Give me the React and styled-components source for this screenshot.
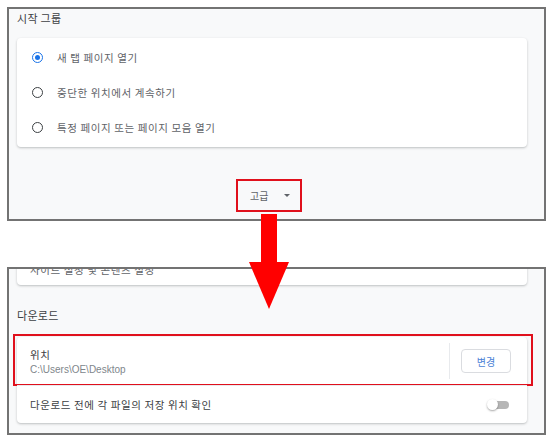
import React from "react"
import styled, { createGlobalStyle } from "styled-components"

const GlobalStyle = createGlobalStyle`
  html, body {
    margin: 0;
    padding: 0;
    background: #ffffff;
    font-family: "Noto Sans CJK KR", "Noto Sans", sans-serif;
  }
`;

const Page = styled.div`
  position: relative;
  width: 552px;
  height: 442px;
  padding: 7px 6px 0 7px;
  box-sizing: border-box;
  display: flex;
  flex-direction: column;
  gap: 46px;
`;

const Panel = styled.div`
  position: relative;
  height: ${(p) => p.height}px;
  box-sizing: border-box;
  border: 2px solid #737373;
  background: #f8f9fa;
  overflow: hidden;
  padding: 0 17px 0 8px;
  display: flex;
  flex-direction: column;
`;

const SectionTitle = styled.div`
  font-size: 11px;
  color: #3c4043;
  height: 16px;
  line-height: 16px;
  margin: ${(p) => p.margin};
  letter-spacing: 0.3px;
`;

const Card = styled.div`
  background: #ffffff;
  border-radius: 4px;
  box-shadow: 0 1px 2px rgba(60, 64, 67, 0.22), 0 1px 3px rgba(60, 64, 67, 0.1);
  display: flex;
  flex-direction: column;
  padding: ${(p) => p.pad || "0"};
  margin: ${(p) => p.margin || "0"};
`;

const RadioRow = styled.div`
  height: 35px;
  display: flex;
  align-items: center;
  padding-left: 15px;
  gap: 14px;
  font-size: 10.5px;
  color: #5f6368;
  letter-spacing: 0.6px;
`;

const Radio = styled.span`
  width: 11px;
  height: 11px;
  border-radius: 50%;
  box-sizing: border-box;
  border: 1.6px solid ${(p) => (p.checked ? "#1a73e8" : "#3c4043")};
  display: flex;
  align-items: center;
  justify-content: center;
  &::after {
    content: "";
    width: 5px;
    height: 5px;
    border-radius: 50%;
    background: ${(p) => (p.checked ? "#1a73e8" : "transparent")};
  }
`;

const Footer = styled.div`
  flex: 1;
  display: flex;
  align-items: center;
  justify-content: center;
  padding-top: 24px;
  padding-right: 6px;
`;

const AdvancedBox = styled.div`
  width: 66px;
  height: 33px;
  box-sizing: border-box;
  border: 2px solid #e0101c;
  display: flex;
  align-items: center;
  justify-content: space-between;
  padding: 0 10px 0 12px;
  font-size: 10px;
  color: #5f6368;
`;

const Caret = styled.span`
  width: 0;
  height: 0;
  border-left: 3px solid transparent;
  border-right: 3px solid transparent;
  border-top: 3px solid #5f6368;
  margin-top: 1px;
`;

const CutRow = styled.div`
  height: 30px;
  display: flex;
  align-items: flex-end;
  justify-content: space-between;
  padding: 0 18px 0 13px;
  font-size: 10.5px;
  color: #5f6368;
  letter-spacing: 0.6px;
  line-height: 14px;
  padding-bottom: 16px;
  box-sizing: border-box;
`;

const CutText = styled.span`
  margin-bottom: -8px;
`;

const Row = styled.div`
  position: relative;
  display: flex;
  align-items: center;
  height: ${(p) => p.height}px;
  padding: 0 16px 0 13px;
  border-top: ${(p) => (p.divided ? "1px solid #e8eaed" : "none")};
  ${(p) =>
    p.highlight &&
    `
    &::after {
      content: "";
      position: absolute;
      top: -3px;
      bottom: -1px;
      left: -4px;
      right: -6px;
      border: 2px solid #e0101c;
      pointer-events: none;
    }
  `}
`;

const RowText = styled.div`
  flex: 1;
  display: flex;
  flex-direction: column;
  gap: 2px;
`;

const Label = styled.div`
  font-size: 10.5px;
  color: #3c4043;
  letter-spacing: 0.6px;
`;

const SubLabel = styled.div`
  font-family: "Liberation Sans", Arial, sans-serif;
  font-size: 10px;
  color: #80868b;
`;

const Separator = styled.div`
  width: 1px;
  height: 36px;
  background: #e8eaed;
  margin-right: 11px;
`;

const OutlineButton = styled.div`
  width: 50px;
  height: 24px;
  box-sizing: border-box;
  border: 1px solid #dadce0;
  border-radius: 4px;
  display: flex;
  align-items: center;
  justify-content: center;
  font-size: 10px;
  color: #4a7fd6;
`;

const Toggle = styled.div`
  position: relative;
  width: 22px;
  height: 12px;
  display: flex;
  align-items: center;
  margin-right: 2px;
  &::before {
    content: "";
    position: absolute;
    left: 3px;
    right: 0;
    height: 8px;
    border-radius: 4px;
    background: #b6b6b6;
  }
  &::after {
    content: "";
    position: absolute;
    left: 0;
    width: 11px;
    height: 11px;
    border-radius: 50%;
    background: #ffffff;
    box-shadow: 0 1px 2px rgba(0, 0, 0, 0.35);
  }
`;

const Chevron = styled.span`
  font-size: 12px;
  color: #5f6368;
  line-height: 6px;
  height: 6px;
  overflow: hidden;
`;

const BigArrow = styled.svg`
  position: absolute;
  left: 247px;
  top: 214px;
`;

const options = [
  { label: "새 탭 페이지 열기", checked: true },
  { label: "중단한 위치에서 계속하기", checked: false },
  { label: "특정 페이지 또는 페이지 모음 열기", checked: false },
];

const App = () => {
  return (
    <>
      <GlobalStyle />
      <Page>
        <Panel height={214}>
          <SectionTitle margin="1px 0 12px 0">시작 그룹</SectionTitle>
          <Card pad="2px 0">
            {options.map((o, i) => (
              <RadioRow key={i}>
                <Radio checked={o.checked} />
                {o.label}
              </RadioRow>
            ))}
          </Card>
          <Footer>
            <AdvancedBox>
              고급
              <Caret />
            </AdvancedBox>
          </Footer>
        </Panel>

        <Panel height={168}>
          <Card margin="-14px 0 0 0">
            <CutRow>
              <CutText>사이트 설정 및 콘텐츠 설정</CutText>
              <Chevron>›</Chevron>
            </CutRow>
          </Card>
          <SectionTitle margin="22px 0 14px 0">다운로드</SectionTitle>
          <Card>
            <Row height={48} highlight>
              <RowText>
                <Label>위치</Label>
                <SubLabel>C:\Users\OE\Desktop</SubLabel>
              </RowText>
              <Separator />
              <OutlineButton>변경</OutlineButton>
            </Row>
            <Row height={37} divided>
              <RowText>
                <Label>다운로드 전에 각 파일의 저장 위치 확인</Label>
              </RowText>
              <Toggle />
            </Row>
          </Card>
        </Panel>

        <BigArrow width="44" height="96" viewBox="0 0 44 96">
          <rect x="14" y="0" width="16" height="50" fill="#ff0000" />
          <polygon points="2,48 42,48 22,95" fill="#ff0000" />
        </BigArrow>
      </Page>
    </>
  )
}

export default App;
